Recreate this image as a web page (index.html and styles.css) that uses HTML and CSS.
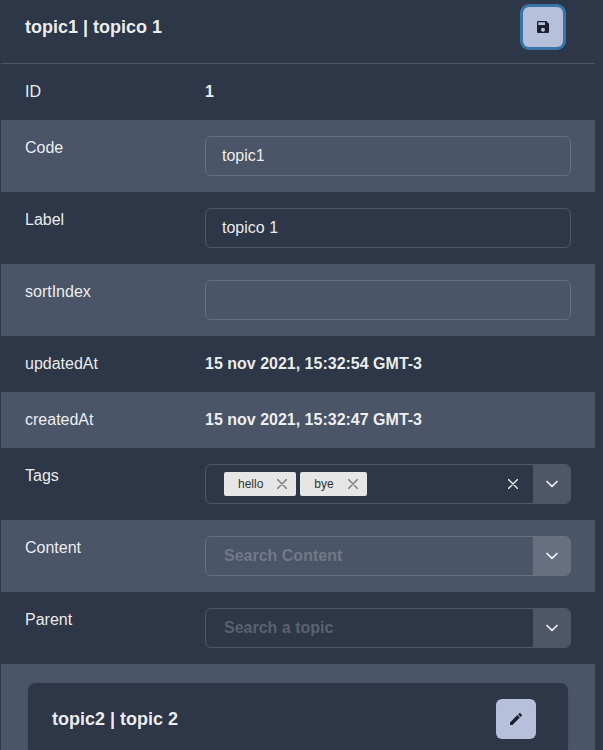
FILE: index.html
```html
<!DOCTYPE html>
<html lang="en">
<head>
<meta charset="utf-8">
<meta name="viewport" content="width=device-width, initial-scale=1">
<title>topic1 | topico 1</title>
<link rel="stylesheet" href="styles.css">
</head>
<body>
<svg class="sprite">
  <symbol id="chevron" viewBox="0 0 12 8"><path d="M1 1.5 6 6.3 11 1.5" fill="none" stroke="currentColor" stroke-width="1.7" stroke-linecap="round" stroke-linejoin="round"/></symbol>
  <symbol id="cross" viewBox="0 0 10 10"><path d="M.5 .5 9.5 9.5M9.5 .5 .5 9.5" fill="none" stroke="currentColor" stroke-width="1.4" stroke-linecap="round"/></symbol>
</svg>
<main class="card">
  <header class="card-header">
    <h1 class="title">topic1 | topico 1</h1>
    <button class="icon-button focused" type="button" aria-label="Save">
      <svg class="icon" viewBox="0 0 12 12"><path fill="currentColor" fill-rule="evenodd" d="M1.3 0h8L12 2.7v8c0 .7-.6 1.3-1.3 1.3H1.3C.6 12 0 11.400 0 10.700V1.300C0 .6.6 0 1.300 0zM1.300 1.300V4H8V1.300zM6 6.700a2 2 0 1 0 0 4 2 2 0 1 0 0-4z"/></svg>
    </button>
  </header>
  <div class="row"><span class="label">ID</span><strong class="value">1</strong></div>
  <div class="row"><label class="label" for="code">Code</label><input class="field" id="code" type="text" value="topic1"></div>
  <div class="row"><label class="label" for="label">Label</label><input class="field" id="label" type="text" value="topico 1"></div>
  <div class="row"><label class="label" for="sort">sortIndex</label><input class="field" id="sort" type="text"></div>
  <div class="row"><span class="label">updatedAt</span><strong class="value">15 nov 2021, 15:32:54 GMT-3</strong></div>
  <div class="row"><span class="label">createdAt</span><strong class="value">15 nov 2021, 15:32:47 GMT-3</strong></div>
  <div class="row">
    <label class="label" for="tags">Tags</label>
    <div class="combo">
      <span class="tag">hello<button class="tag-remove" type="button" aria-label="Remove hello"><svg class="cross"><use href="#cross"/></svg></button></span>
      <span class="tag">bye<button class="tag-remove" type="button" aria-label="Remove bye"><svg class="cross"><use href="#cross"/></svg></button></span>
      <input class="search" id="tags" type="text">
      <button class="clear" type="button" aria-label="Clear tags"><svg class="cross"><use href="#cross"/></svg></button>
      <button class="toggle" type="button" aria-label="Open tags"><svg class="chevron"><use href="#chevron"/></svg></button>
    </div>
  </div>
  <div class="row">
    <label class="label" for="content">Content</label>
    <div class="combo">
      <input class="search" id="content" type="text" placeholder="Search Content">
      <button class="toggle" type="button" aria-label="Open content"><svg class="chevron"><use href="#chevron"/></svg></button>
    </div>
  </div>
  <div class="row">
    <label class="label" for="parent">Parent</label>
    <div class="combo">
      <input class="search" id="parent" type="text" placeholder="Search a topic">
      <button class="toggle" type="button" aria-label="Open parent"><svg class="chevron"><use href="#chevron"/></svg></button>
    </div>
  </div>
  <section class="children">
    <article class="child">
      <h2 class="title">topic2 | topic 2</h2>
      <button class="icon-button" type="button" aria-label="Edit">
        <svg class="icon" viewBox="0 0 12 12"><path fill="currentColor" d="M0 9.500 7.400 2.100 9.900 4.600 2.500 12H0zM8.100 1.400 9.300.2a.7.7 0 0 1 1 0l1.500 1.500a.7.7 0 0 1 0 1l-1.200 1.200z"/></svg>
      </button>
    </article>
  </section>
</main>
</body>
</html>
```
FILE: styles.css
```css
:root {
  --dark: #2d3748;
  --light: #4a5568;
  --text: rgba(255, 255, 255, 0.92);
  --line: rgba(255, 255, 255, 0.16);
  --hint: rgba(255, 255, 255, 0.22);
}

* {
  box-sizing: border-box;
}

body {
  margin: 0;
  background: var(--dark);
  color: var(--text);
  font: 16px/24px "Liberation Sans", Arial, sans-serif;
}

button,
input {
  margin: 0;
  padding: 0;
  border: 0;
  background: none;
  color: inherit;
  font: inherit;
}

button {
  display: flex;
  align-items: center;
  justify-content: center;
  flex: none;
}

.sprite {
  display: none;
}

.card {
  margin: 0 8px 0 1px;
  min-height: 100vh;
  display: flex;
  flex-direction: column;
}

.card-header,
.child {
  display: flex;
  align-items: center;
  justify-content: space-between;
  padding: 16px 32px 16px 24px;
}

.card-header {
  padding-top: 7px;
  border-bottom: 1px solid var(--light);
}

.title {
  margin: 0;
  font-size: 18px;
  line-height: 24px;
}

.icon-button {
  width: 40px;
  height: 40px;
  border-radius: 6px;
  background: #b7c0db;
  color: #1a202c;
}

.focused {
  box-shadow: 0 0 0 3px #3874a8;
}

.icon {
  width: 12px;
  height: 12px;
}

.row {
  display: grid;
  grid-template-columns: 180px 1fr;
  align-items: start;
  padding: 16px 24px;
}

.row:nth-of-type(even) {
  background: var(--light);
}

.field,
.combo {
  width: 100%;
  height: 40px;
  border: 1px solid var(--line);
  border-radius: 6px;
}

.field {
  padding: 0 16px;
}

.combo {
  display: flex;
  align-items: center;
  gap: 4px;
  padding-left: 18px;
  overflow: hidden;
}

.tag {
  display: flex;
  align-items: center;
  gap: 14px;
  height: 24px;
  padding: 0 9px 0 14px;
  border-radius: 2px;
  background: #e6e6e6;
  color: #333;
  font-size: 12px;
}

.tag-remove {
  color: #777;
}

.cross {
  width: 10px;
  height: 10px;
}

.search {
  flex: 1;
  min-width: 0;
  height: 100%;
}

.search::placeholder {
  color: var(--hint);
  font-weight: bold;
  opacity: 1;
}

.clear {
  width: 24px;
  height: 24px;
  margin-right: 4px;
}

.toggle {
  width: 37px;
  height: 100%;
  background: var(--line);
}

.chevron {
  width: 12px;
  height: 8px;
}

.children {
  flex: 1;
  display: flex;
  padding: 19px 27px 0;
  background: var(--light);
}

.child {
  flex: 1;
  padding-bottom: 11px;
  border-radius: 8px 8px 0 0;
  background: var(--dark);
  box-shadow: 0 1px 3px rgba(0, 0, 0, 0.1);
}
```
